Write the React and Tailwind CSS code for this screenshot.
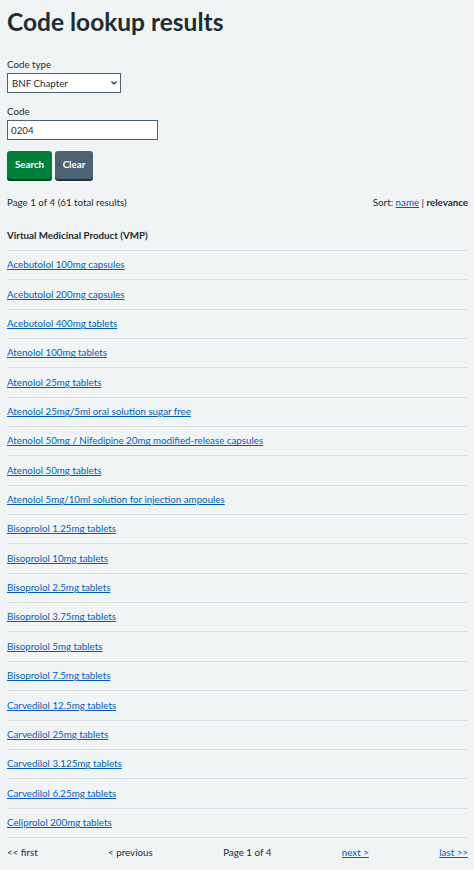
import React from "react";

const items = [
  "Acebutolol 100mg capsules",
  "Acebutolol 200mg capsules",
  "Acebutolol 400mg tablets",
  "Atenolol 100mg tablets",
  "Atenolol 25mg tablets",
  "Atenolol 25mg/5ml oral solution sugar free",
  "Atenolol 50mg / Nifedipine 20mg modified-release capsules",
  "Atenolol 50mg tablets",
  "Atenolol 5mg/10ml solution for injection ampoules",
  "Bisoprolol 1.25mg tablets",
  "Bisoprolol 10mg tablets",
  "Bisoprolol 2.5mg tablets",
  "Bisoprolol 3.75mg tablets",
  "Bisoprolol 5mg tablets",
  "Bisoprolol 7.5mg tablets",
  "Carvedilol 12.5mg tablets",
  "Carvedilol 25mg tablets",
  "Carvedilol 3.125mg tablets",
  "Carvedilol 6.25mg tablets",
  "Celiprolol 200mg tablets",
];

export default function App() {
  return (
    <div
      className="min-h-[870px] bg-[#f0f4f5] pl-[7px] pr-[6px] pt-[5px] text-[#212b32] text-[9.75px]"
      style={{ fontFamily: 'Lato, "Noto Sans", sans-serif' }}
    >
      <h1 className="text-[24.5px] font-bold leading-[34px] mb-[18px]">Code lookup results</h1>

      <div className="mb-[11px]">
        <label className="block leading-[15px] mb-[1px]">Code type</label>
        <div className="relative w-[114px] h-[20px] border border-[#4c6272] bg-white flex items-center pl-[4px]">
          <span>BNF Chapter</span>
          <svg className="absolute right-[3px] top-[7px]" width="6" height="4" viewBox="0 0 6 4">
            <path d="M0.5 0.5 L3 3 L5.5 0.5" stroke="#212b32" strokeWidth="1.2" fill="none" />
          </svg>
        </div>
      </div>

      <div className="mb-[11px]">
        <label className="block leading-[15px] mb-[1px]">Code</label>
        <div className="w-[151px] h-[20px] border border-[#4c6272] bg-white flex items-center pl-[3px]">
          0204
        </div>
      </div>

      <div className="flex gap-[3px] mb-[16px]">
        <button className="h-[28px] w-[45px] bg-[#007f3b] text-white font-bold rounded-[3px] shadow-[0_2px_0_#00401e] pb-[2px]">
          Search
        </button>
        <button className="h-[28px] w-[38px] bg-[#4c6272] text-white font-bold rounded-[3px] shadow-[0_2px_0_#263139] pb-[2px]">
          Clear
        </button>
      </div>

      <div className="flex justify-between leading-[14px] mb-[19px]">
        <span>Page 1 of 4 (61 total results)</span>
        <span>
          Sort: <a className="text-[#005eb8] underline">name</a> | <b>relevance</b>
        </span>
      </div>

      <div className="font-bold leading-[14px] pb-[8px] border-b border-[#d8dde0]">
        Virtual Medicinal Product (VMP)
      </div>
      {items.map((t) => (
        <div key={t} className="h-[29.35px] flex items-center pb-[1px] border-b border-[#d8dde0]">
          <a className="text-[#005eb8] underline">{t}</a>
        </div>
      ))}

      <div className="flex justify-between h-[29px] items-center">
        <span>&lt;&lt; first</span>
        <span>&lt; previous</span>
        <span>Page 1 of 4</span>
        <a className="text-[#005eb8] underline">next &gt;</a>
        <a className="text-[#005eb8] underline">last &gt;&gt;</a>
      </div>
    </div>
  );
}
